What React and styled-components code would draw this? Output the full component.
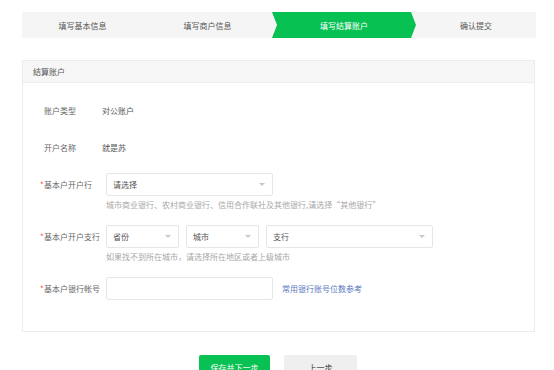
import React from "react";
import styled, { createGlobalStyle } from "styled-components";

const GlobalStyle = createGlobalStyle`
  body {
    margin: 0;
    background: #fff;
    font-family: "Noto Sans CJK SC", "Noto Sans", sans-serif;
    font-size: 8px;
    color: #555;
  }
`;

const Page = styled.div`
  padding: 12px 0 0 22px;
  width: 514px;
`;

const Steps = styled.div`
  display: grid;
  grid-template-columns: 121px 129px 144px 120px;
  height: 26px;
  background: #f5f5f5;
`;

const Step = styled.div`
  display: flex;
  align-items: center;
  justify-content: center;
  font-size: 8px;
  color: ${(p) => (p.$active ? "#fff" : "#555")};
  background: ${(p) => (p.$active ? "#07c153" : "transparent")};
  clip-path: ${(p) =>
    p.$active
      ? "polygon(0 0, 139px 0, 144px 50%, 139px 100%, 0 100%, 5px 50%)"
      : "none"};
`;

const Card = styled.div`
  margin-top: 22px;
  width: 511px;
  border: 1px solid #ececec;
`;

const CardHeader = styled.div`
  height: 21px;
  display: flex;
  align-items: center;
  padding-left: 10px;
  background: #f7f7f7;
  border-bottom: 1px solid #ededed;
  color: #555;
`;

const CardBody = styled.div`
  padding: 16px 0 31px 17px;
`;

const Item = styled.div`
  margin-bottom: ${(p) => (p.$last ? "0" : "14px")};
`;

const Row = styled.div`
  display: flex;
  align-items: center;
  height: 23px;
`;

const Label = styled.div`
  width: 62px;
  padding-left: ${(p) => (p.$required ? "0" : "4px")};
  box-sizing: border-box;
  color: #666;
  white-space: nowrap;
`;

const Star = styled.span`
  display: inline-block;
  width: 4px;
  color: #f04848;
`;

const Value = styled.div`
  color: #555;
`;

const Controls = styled.div`
  display: flex;
  align-items: center;
  gap: 7px;
  margin-left: 4px;
`;

const Select = styled.div`
  width: ${(p) => p.$w}px;
  height: 23px;
  box-sizing: border-box;
  border: 1px solid #e6e6e6;
  border-radius: 2px;
  background: #fff;
  display: flex;
  align-items: center;
  justify-content: space-between;
  padding: 0 7px 0 6px;
  color: #555;
`;

const Caret = styled.span`
  width: 0;
  height: 0;
  border-left: 3px solid transparent;
  border-right: 3px solid transparent;
  border-top: 3px solid #c8c8c8;
`;

const Input = styled.div`
  width: 167px;
  height: 23px;
  box-sizing: border-box;
  border: 1px solid #e6e6e6;
  border-radius: 2px;
  background: #fff;
`;

const Link = styled.a`
  margin-left: 2px;
  color: #5a78c0;
  text-decoration: none;
`;

const Hint = styled.div`
  margin: 3px 0 0 66px;
  line-height: 12px;
  color: #a8a8a8;
`;

const Actions = styled.div`
  display: flex;
  gap: 14px;
  margin: 23px 0 0 177px;
`;

const Button = styled.button`
  height: 24px;
  width: ${(p) => p.$w}px;
  border: 0;
  border-radius: 2px;
  font-family: inherit;
  font-size: 8px;
  color: ${(p) => (p.$primary ? "#fff" : "#333")};
  background: ${(p) => (p.$primary ? "#07c153" : "#efefef")};
`;

const steps = ["填写基本信息", "填写商户信息", "填写结算账户", "确认提交"];

export default function App() {
  return (
    <>
      <GlobalStyle />
      <Page>
        <Steps>
          {steps.map((s, i) => (
            <Step key={s} $active={i === 2}>
              {s}
            </Step>
          ))}
        </Steps>

        <Card>
          <CardHeader>结算账户</CardHeader>
          <CardBody>
            <Item>
              <Row>
                <Label>账户类型</Label>
                <Value>对公账户</Value>
              </Row>
            </Item>
            <Item>
              <Row>
                <Label>开户名称</Label>
                <Value>就是苏</Value>
              </Row>
            </Item>
            <Item>
              <Row>
                <Label $required>
                  <Star>*</Star>基本户开户行
                </Label>
                <Controls>
                  <Select $w={167}>
                    请选择<Caret />
                  </Select>
                </Controls>
              </Row>
              <Hint>城市商业银行、农村商业银行、信用合作联社及其他银行,请选择“其他银行”</Hint>
            </Item>
            <Item>
              <Row>
                <Label $required>
                  <Star>*</Star>基本户开户支行
                </Label>
                <Controls>
                  <Select $w={73}>
                    省份<Caret />
                  </Select>
                  <Select $w={73}>
                    城市<Caret />
                  </Select>
                  <Select $w={167}>
                    支行<Caret />
                  </Select>
                </Controls>
              </Row>
              <Hint>如果找不到所在城市，请选择所在地区或者上级城市</Hint>
            </Item>
            <Item $last>
              <Row>
                <Label $required>
                  <Star>*</Star>基本户银行帐号
                </Label>
                <Controls>
                  <Input />
                  <Link href="#">常用银行账号位数参考</Link>
                </Controls>
              </Row>
            </Item>
          </CardBody>
        </Card>

        <Actions>
          <Button $primary $w={71}>保存并下一步</Button>
          <Button $w={73}>上一步</Button>
        </Actions>
      </Page>
    </>
  );
}
